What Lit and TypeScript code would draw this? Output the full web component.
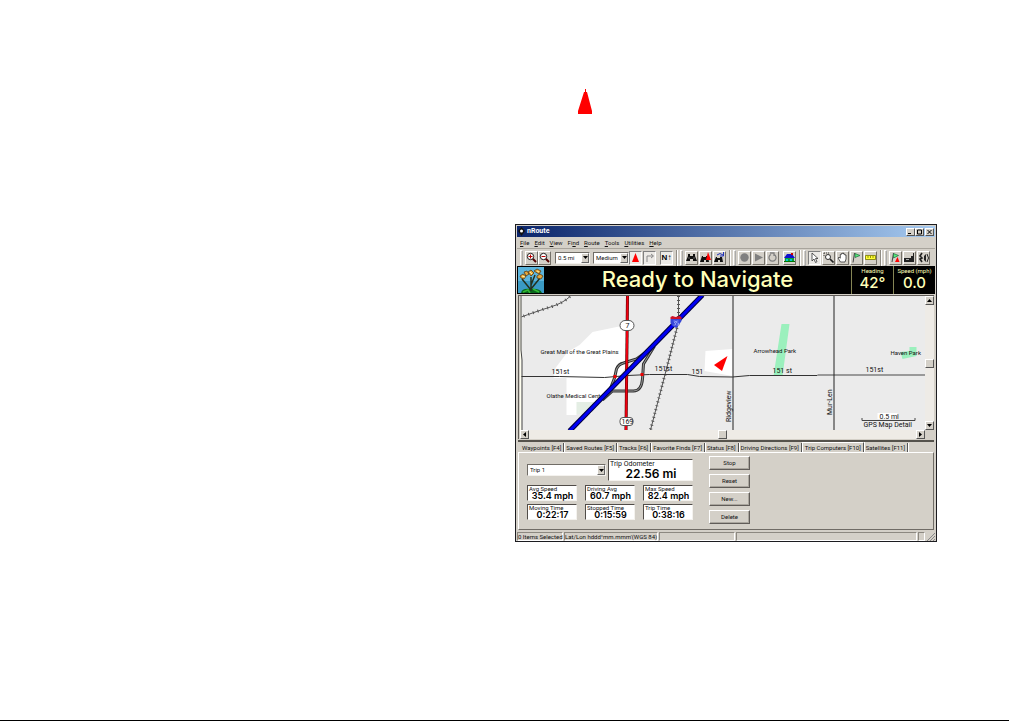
import { LitElement, html, svg, css } from "lit";
import { customElement, property } from "lit/decorators.js";

const glyphs: Record<string, unknown> = {
  zoomIn: svg`<path d="M6.500 6.500L10 10" stroke="#500" stroke-width="2"/><circle cx="4.500" cy="4.500" r="3.200" fill="#fff" stroke="#222"/><path d="M2.500 4.500h4M4.500 2.500v4" stroke="#b00"/>`,
  zoomOut: svg`<path d="M6.500 6.500L10 10" stroke="#500" stroke-width="2"/><circle cx="4.500" cy="4.500" r="3.200" fill="#fff" stroke="#222"/><path d="M2.500 4.500h4" stroke="#b00"/>`,
  track: svg`<path d="M5.500 1L9 10H2z" fill="#f00"/>`,
  turn: svg`<path d="M3 10V4h6M7 2l2.500 2L7 6" stroke="#888" fill="none"/>`,
  find: svg`<path d="M2 2h2v2h3V2h2v2l2 5H7V7H4v2H0l2-5z" fill="#111"/><path d="M3 5v2M8 5v2" stroke="#999" stroke-width=".6"/>`,
  findNear: svg`<path d="M2 4h1v1h3V4h2l1 6H6V8H4v2H0z" fill="#111"/><path d="M8 0l3 8H6z" fill="#f00"/>`,
  findLast: svg`<path d="M2 5h1v1h3V5h2l1 5H6V8H4v2H0z" fill="#111"/><path d="M3 3q3-3 6 0M9.500 0v4H6" stroke="#23b" fill="none"/>`,
  record: svg`<circle cx="5.500" cy="5.500" r="4.200" fill="#808080"/>`,
  play: svg`<path d="M2 1.500l8 4-8 4z" fill="#808080"/>`,
  loop: svg`<path d="M4 2.500a3.500 3.500 0 1 0 3 0M3 1h4v3" stroke="#808080" fill="none" stroke-width="1.300"/>`,
  home: svg`<path d="M0 6l3-4h5l3 4z" fill="#11c"/><path d="M7 1h2v2H7z" fill="#c00"/><path d="M1 6h9v3H1z" fill="#0a9a3a"/><path d="M0 9h11v1H0z" fill="#070"/><path d="M2 7h2v2H2zM6 7h2v2H6z" fill="#0cc"/>`,
  pointer: svg`<path d="M3 1v8l2-2 1.500 3.500 1.500-.8L6.500 6.500H9z" fill="#fff" stroke="#333" stroke-width=".8"/>`,
  zoomBox: svg`<path d="M1 1h5M1 1v4" stroke="#444" stroke-dasharray="1 1"/><circle cx="5" cy="5" r="2.500" fill="#fff" stroke="#333"/><path d="M7 7l3.500 3.500" stroke="#222" stroke-width="1.600"/>`,
  hand: svg`<path d="M3.500 10L1 6l1-.8 1.300 1V2.500h1V1.500h1.200V1h1v1h1.300v1h1.200v4l-1 3z" fill="#fff" stroke="#333" stroke-width=".8"/>`,
  flag: svg`<path d="M2 10.500L3.500 1" stroke="#444"/><path d="M4 1.500l5 2-5 2z" fill="#5e7" stroke="#264" stroke-width=".7"/>`,
  ruler: svg`<path d="M.5 3.500h10v4H.5z" fill="#ff3" stroke="#770" stroke-width=".8"/><path d="M3 4v2M5.500 4v2M8 4v2" stroke="#770" stroke-width=".8"/>`,
  goFlag: svg`<path d="M2 10L3.500 1" stroke="#444"/><path d="M3.500 1.500l5 2-5 2.500z" fill="#5e7" stroke="#264" stroke-width=".7"/><path d="M7.500 5l2 5H5z" fill="#f00"/>`,
  device: svg`<path d="M0 6h7V4h2V1h1v9H0z" fill="#222"/><path d="M2 7h3v1H2z" fill="#aaa"/>`,
  sound: svg`<path d="M4 1L2 4l2 2-2 1 2 3" stroke="#222" fill="none" stroke-width="1.600"/><path d="M6 4l2-2v8L6 8z" fill="#222"/><path d="M9 2q3 4 0 8" stroke="#222" fill="none"/>`,
};

@customElement("tool-button")
class ToolButton extends LitElement {
  @property() icon = "";
  @property() label = "";
  @property({ type: Boolean }) pressed = false;

  static styles = css`
    :host { display: block; flex: none; }
    .tool {
      display: grid; place-items: center; box-sizing: border-box;
      width: 13px; height: 14px; padding: 0;
      border: 1px solid; border-color: #fff #747068 #747068 #fff;
      background: #d4d0c8; color: #000;
      font: bold 8px/10px "Liberation Sans", sans-serif;
    }
    .pressed { background: #eceae6; border-color: #808080 #fff #fff #808080; }
    .icon { display: block; width: 11px; height: 11px; }
  `;

  render() {
    return html`<button class="tool ${this.pressed ? "pressed" : ""}" aria-label=${this.label} aria-pressed=${this.pressed}>
      ${this.icon === "north"
        ? html`<span>N↑</span>`
        : html`<svg class="icon" viewBox="0 0 11 11" aria-hidden="true">${glyphs[this.icon]}</svg>`}
    </button>`;
  }
}

@customElement("drop-down")
class DropDown extends LitElement {
  @property() label = "";
  @property({ type: Array }) options: string[] = [];

  static styles = css`
    :host { display: block; min-width: 0; }
    .field {
      display: flex; box-sizing: border-box; height: 12px;
      border: 1px solid; border-color: #706c66 #f4f2ee #f4f2ee #706c66; background: #fff;
    }
    .select {
      flex: 1; min-width: 0; appearance: none; border: 0; padding: 0 0 0 2px; margin: 0;
      background: none; color: #111; font: 6px/10px Roboto, sans-serif;
    }
    .arrow {
      display: grid; place-items: center; box-sizing: border-box; width: 8px;
      background: #d4d0c8; border: 1px solid; border-color: #fff #666 #666 #fff;
    }
    .tri { display: block; width: 5px; height: 3px; }
  `;

  render() {
    return html`<label class="field">
      <select class="select" aria-label=${this.label}>${this.options.map((o) => html`<option>${o}</option>`)}</select>
      <span class="arrow"><svg class="tri" viewBox="0 0 5 3"><path d="M0 0h5L2.500 3z"/></svg></span>
    </label>`;
  }
}

@customElement("route-map")
class RouteMap extends LitElement {
  static styles = css`
    :host { display: block; min-width: 0; }
    .map { display: block; width: 100%; height: 134px; background: #ebebeb; }
    .map text { font: 6px Roboto, sans-serif; fill: #111; }
    .map .large { font-size: 7px; }
  `;

  render() {
    const rail = "M679 296V322L668 365L651 430";
    const spur = "M519 318Q538 311 551 307T571 296";
    const ramps = "M655 346L637 359L624 363Q619 364 617 369L615 378L610 391L603 400M655 346L644 364L643 379Q642 391 634 391L613 391L603 400";
    const blue = "M570 431L703 295";
    return html`<svg class="map" viewBox="520 296 406 134" preserveAspectRatio="xMidYMid slice" role="img" aria-label="GPS map">
      <path fill="#fff" d="M593 332L622 326H627V366L605 397L592 406V414H577V415H567V378H554L556 368L568 352L580 345Z"/>
      <path fill="#e4eee4" d="M577 402H597L587 414H577Z"/>
      <path fill="#fff" d="M706 351L733 349V376L705 371Z"/>
      <path fill="#9bf0bd" d="M782 324H790L783 376H774ZM901 352L910 351V347H917V356L903 359Z"/>
      <g fill="none" stroke="#555">
        <path d=${rail} stroke-width="1"/><path d=${rail} stroke-width="3" stroke-dasharray="1 3"/>
        <path d=${spur} stroke-width="1"/><path d=${spur} stroke-width="3" stroke-dasharray="1 4"/>
      </g>
      <path fill="#fffff0" d="M520 296h2v134h-2z"/>
      <path fill="none" stroke="#444" d="M521.500 296V350L522.500 360V430"/>
      <g fill="none" stroke="#333">
        <path d="M522 376.500H560L605 377.500L628 375.500L650 374.500H688L700 376.500L733 377L750 375.500H818"/>
        <path d="M818 375H926" stroke="#999" stroke-width="2"/>
        <path d="M733.500 296V430M834.500 296V430" stroke="#222"/>
      </g>
      <text x="547" y="398">Olathe Medical Center</text>
      <path d=${ramps} fill="none" stroke="#333" stroke-width="3"/>
      <path d=${ramps} fill="none" stroke="#999" stroke-width="1"/>
      <path d="M628 296L626.500 430" stroke="#400" stroke-width="3"/>
      <path d="M628 296L626.500 430" stroke="#f00010" stroke-width="2"/>
      <path d=${blue} stroke="#00003c" stroke-width="5"/>
      <path d=${blue} stroke="#0000f4" stroke-width="3"/>
      <path d="M614 375h3v3h-3zM641 373h3v3h-3z" fill="#e00"/>
      <rect x="620.500" y="320.500" width="14" height="10" rx="5" fill="#fff" stroke="#555"/>
      <text class="large" x="626" y="328">7</text>
      <rect x="620.500" y="417.500" width="13" height="8" rx="3" fill="#fff" stroke="#555"/>
      <text class="large" x="622" y="424">169</text>
      <path d="M671 319h11v2l-2 3-3 4-4-2-2-3z" fill="#3545d8"/>
      <path d="M671 317l2-1 3 1 4-1 2 1v2h-11z" fill="#d01028"/>
      <path d="M674 321h2v1h-1v1h1v2h-2M679 321h-2v2h2v2h-2" stroke="#a9b4ff" stroke-width=".7" fill="none"/>
      <path d="M728 356L722.500 371L714.500 365Z" fill="#f00"/>
      <text x="541" y="354">Great Mall of the Great Plains</text>
      <text class="large" x="552" y="374">151st</text>
      <text class="large" x="655" y="371">151st</text>
      <text class="large" x="692" y="374">151</text>
      <text x="754" y="353">Arrowhead Park</text>
      <text class="large" x="773" y="373">151 st</text>
      <text class="large" x="866" y="372">151st</text>
      <text x="891" y="355">Haven Park</text>
      <text class="large" transform="translate(731 422) rotate(-90)">Ridgeview</text>
      <text class="large" transform="translate(832 415) rotate(-90)">Mur-Len</text>
      <path fill="#fff" d="M878 413h20v6h-20z"/>
      <path d="M862.500 418v2.500h53V418" fill="none" stroke="#444"/>
      <text class="large" x="880" y="419">0.5 mi</text>
      <text class="large" x="864" y="427">GPS Map Detail</text>
    </svg>`;
  }
}

@customElement("app-root")
class AppRoot extends LitElement {
  static styles = css`
    :host {
      display: block; box-sizing: border-box; min-height: 100vh;
      background: #fff; border-bottom: 1px solid #000; color: #111;
      font: 6px/8px Roboto, sans-serif;
    }
    button { font: inherit; color: inherit; }
    .page { display: grid; grid-template-columns: 515px minmax(0, 1fr) 72px; row-gap: 110px; padding-top: 89px; }
    .marker { grid-column: 2; display: block; width: 14px; height: 25px; margin-left: 63px; }
    .window { grid-column: 2; box-sizing: border-box; border: 1px solid #1c1c20; background: #d4d0c8; padding: 1px 1px 0; }
    .title {
      display: flex; align-items: center; gap: 2px; height: 11px; padding: 0 1px;
      background: linear-gradient(90deg, #0a246a, #a6caf0); color: #fff;
      font: bold 7px/11px Roboto, sans-serif;
    }
    .app-icon { display: block; width: 7px; height: 9px; }
    .grow { flex: 1; }
    .controls { display: flex; }
    .control, .scroll-button, .thumb {
      display: grid; place-items: center; box-sizing: border-box; padding: 0;
      background: #d4d0c8; border: 1px solid; border-color: #fff #555 #555 #fff;
    }
    .control { width: 9px; height: 8px; }
    .control:last-child { margin-left: 1px; }
    .control svg { display: block; width: 7px; height: 6px; }
    .menu { display: flex; align-items: center; gap: 5px; height: 11px; padding-left: 3px; }
    .menu-item { border: 0; background: none; padding: 0; }
    .toolbar { display: flex; align-items: center; height: 18px; padding-left: 2px; border-top: 1px solid #a8a49c; box-sizing: border-box; }
    .toolbar > * { flex: none; }
    .grip { box-sizing: border-box; width: 3px; height: 16px; border: 1px solid; border-color: #fff #aaa #aaa #fff; margin: 0 2px 0 1px; }
    .divider { width: 1px; height: 16px; background: #908c84; border-right: 1px solid #fff; margin: 0 1px 0 3px; }
    .set { display: flex; gap: 1px; }
    .zoom-set { gap: 0; padding-right: 4px; }
    .scale { width: 35px; }
    .detail { width: 36px; padding-left: 3px; }
    .north, .home { padding-left: 4px; }
    .banner { display: flex; height: 28px; background: #000; color: #ffffb8; box-sizing: border-box; }
    .logo { display: block; width: 26px; height: 26px; margin: 1px 0 0 1px; }
    .message { flex: 1; margin: 0; text-align: center; font: 500 22px/27px Inter, sans-serif; }
    .gauge { width: 41px; border-left: 1px solid #858555; text-align: center; }
    .gauge-label { line-height: 8px; padding-top: 1px; }
    .gauge-value { font: 500 15px/16px Inter, sans-serif; }
    .view { display: grid; grid-template-columns: minmax(0, 1fr) 9px; margin: 1px 1px 0 1px; padding-left: 1px; border: 1px solid; border-color: #605c58 #fff #fff #605c58; border-right: 0; border-bottom: 0; }
    .scroll { display: flex; background: #eeebe6; }
    .vertical { flex-direction: column; }
    .track { flex: 1; display: flex; align-items: center; justify-content: center; }
    .scroll-button, .thumb { width: 9px; height: 9px; }
    .scroll-button svg { display: block; width: 5px; height: 5px; }
    .tabs { display: flex; align-items: flex-end; height: 12px; margin: 1px 1px 0; border-top: 2px solid #55524c; box-sizing: border-box; padding-left: 2px; }
    .tab { height: 9px; padding: 0 2px; border: 0; border-right: 1px solid #555; background: none; line-height: 8px; box-shadow: 1px 0 #fff; white-space: nowrap; }
    .active { height: 10px; border-left: 1px solid #fff; border-top: 1px solid #fff; line-height: 7px; }
    .panel {
      display: grid; grid-template-columns: 166px 41px; gap: 16px; margin: 0 1px;
      border: 1px solid; border-color: #fff #706c66 #706c66 #fff; padding: 3px 8px 5px;
    }
    .readings { display: grid; gap: 3px; padding-top: 3px; align-content: start; }
    .summary { display: grid; grid-template-columns: 79px 1fr; gap: 2px; align-items: center; margin-bottom: 1px; }
    .cells { display: grid; grid-template-columns: repeat(3, 50px); gap: 3px 8px; margin: 0; }
    .cell {
      box-sizing: border-box; height: 16px; background: #fff; padding-left: 1px; margin: 0;
      border: 1px solid; border-color: #504c48 #f4f2ee #f4f2ee #504c48;
    }
    .cell-label { font: 6px/6px Roboto, sans-serif; white-space: nowrap; }
    .cell-value { margin: 0; text-align: center; font: 600 9px/8px Inter, sans-serif; color: #000; }
    .odometer { height: 22px; }
    .odometer .cell-label { font: 7px/8px Roboto, sans-serif; }
    .odometer .cell-value { font: 600 12px/12px Inter, sans-serif; }
    .actions { display: grid; gap: 4px; align-content: start; }
    .action { height: 14px; padding: 0; background: #d4d0c8; border: 1px solid; border-color: #fff #605c58 #605c58 #fff; box-shadow: inset -1px -1px #aaa69e; }
    .status { display: flex; gap: 1px; height: 9px; margin-top: 2px; white-space: nowrap; }
    .pane { box-sizing: border-box; height: 9px; border: 1px solid; border-color: #8c8880 #fff #fff #8c8880; line-height: 8px; }
    .selected { width: 46px; }
    .position { width: 94px; }
    .blank { width: 76px; }
    .end { width: 7px; }
    .resize { display: block; width: 9px; height: 9px; }
  `;

  private arrow(label: string, d: string) {
    return html`<button class="scroll-button" aria-label=${label}><svg viewBox="0 0 5 5"><path d=${d}/></svg></button>`;
  }

  private cell(label: string, value: string) {
    return html`<div class="cell"><dt class="cell-label">${label}</dt><dd class="cell-value">${value}</dd></div>`;
  }

  private tool(icon: string, label: string, pressed = false) {
    return html`<tool-button icon=${icon} label=${label} ?pressed=${pressed}></tool-button>`;
  }

  render() {
    const menus = ["File", "Edit", "View", "Find", "Route", "Tools", "Utilities", "Help"];
    const keys = [0, 0, 0, 2, 0, 0, 0, 0];
    const tabs = ["Waypoints [F4]", "Saved Routes [F5]", "Tracks [F6]", "Favorite Finds [F7]", "Status [F8]", "Driving Directions [F9]", "Trip Computers [F10]", "Satellites [F11]"];
    return html`<main class="page">
      <svg class="marker" viewBox="0 0 14 25" aria-hidden="true"><path d="M7 0h1v3h1l5 19v3H0v-3L6 3h1z" fill="#f00"/></svg>
      <section class="window">
        <header class="title">
          <svg class="app-icon" viewBox="0 0 7 9"><path d="M3.500 0L7 4 3.500 9 0 4z" fill="#111"/><circle cx="3.500" cy="4" r="1.500" fill="#fff"/></svg>
          <span class="grow">nRoute</span>
          <span class="controls">
            <button class="control" aria-label="Minimize"><svg viewBox="0 0 7 6"><path d="M1 4h3v1H1z"/></svg></button>
            <button class="control" aria-label="Maximize"><svg viewBox="0 0 7 6"><path d="M1.500 1h4v4h-4z" fill="none" stroke="#000"/></svg></button>
            <button class="control" aria-label="Close"><svg viewBox="0 0 7 6"><path d="M1.500 1l4 4M5.500 1l-4 4" stroke="#000"/></svg></button>
          </span>
        </header>
        <nav class="menu">
          ${menus.map((m, i) => html`<button class="menu-item">${m.slice(0, keys[i])}<u>${m[keys[i]]}</u>${m.slice(keys[i] + 1)}</button>`)}
        </nav>
        <div class="toolbar" role="toolbar">
          <span class="grip"></span>
          <div class="set zoom-set">${this.tool("zoomIn", "Zoom in")}${this.tool("zoomOut", "Zoom out")}</div>
          <drop-down class="scale" label="Map scale" .options=${["0.5 mi"]}></drop-down>
          <drop-down class="detail" label="Map detail" .options=${["Medium"]}></drop-down>
          <div class="set">${this.tool("track", "Track vehicle", true)}${this.tool("turn", "Show turns", true)}</div>
          <div class="north">${this.tool("north", "North up", true)}</div>
          <span class="divider"></span><span class="grip"></span>
          <div class="set">${this.tool("find", "Find")}${this.tool("findNear", "Find nearest")}${this.tool("findLast", "Recent finds")}</div>
          <span class="divider"></span><span class="grip"></span>
          <div class="set">${this.tool("record", "Record")}${this.tool("play", "Play")}${this.tool("loop", "Recalculate")}</div>
          <div class="home">${this.tool("home", "Go home")}</div>
          <span class="divider"></span><span class="grip"></span>
          <div class="set">${this.tool("pointer", "Select", true)}${this.tool("zoomBox", "Zoom tool")}${this.tool("hand", "Pan")}${this.tool("flag", "Waypoint")}${this.tool("ruler", "Measure")}</div>
          <span class="divider"></span><span class="grip"></span>
          <div class="set">${this.tool("goFlag", "Mark position")}${this.tool("device", "Device")}${this.tool("sound", "Voice")}</div>
        </div>
        <div class="banner">
          <svg class="logo" viewBox="0 0 26 26" aria-hidden="true">
            <path d="M0 0h26v26H0z" fill="#5cb4dc"/><path d="M0 14h26v12H0z" fill="#3a9ac4"/>
            <path d="M3 26q1-5 9-4 10-1 12 4z" fill="#08661c"/><path d="M5 25l5-2 2 3M15 22l6 3" stroke="#34b934" fill="none" stroke-width="1.500"/>
            <path d="M13 24V10M13 23L4 12M13 22L22 11M13 18L17 8" stroke="#24301c" stroke-width="1.500" fill="none"/>
            <path d="M2 9l3-2 3 2-2 3-3-1zM10 5l3-2 3 3-3 3zM16 4l3-2 4 2-2 3zM19 9l3-2 3 2-2 3-4-1zM6 5l3-1 2 3-3 2z" fill="#e6a83c" stroke="#5b3b12" stroke-width=".8"/>
            <path d="M4 9l3 1M12 5l2 2M19 4l2 1" stroke="#fff0a0"/>
          </svg>
          <h1 class="message">Ready to Navigate</h1>
          <div class="gauge"><div class="gauge-label">Heading</div><div class="gauge-value">42°</div></div>
          <div class="gauge"><div class="gauge-label">Speed (mph)</div><div class="gauge-value">0.0</div></div>
        </div>
        <div class="view">
          <route-map></route-map>
          <div class="scroll vertical">
            ${this.arrow("Scroll up", "M0 4h5L2.500 1z")}<div class="track"><span class="thumb"></span></div>${this.arrow("Scroll down", "M0 1h5L2.500 4z")}
          </div>
          <div class="scroll">
            ${this.arrow("Scroll left", "M4 0v5L1 2.500z")}<div class="track"><span class="thumb"></span></div>${this.arrow("Scroll right", "M1 0v5l3-2.500z")}
          </div>
        </div>
        <div class="tabs" role="tablist">
          ${tabs.map((t, i) => html`<button role="tab" aria-selected=${i === 6} class="tab ${i === 6 ? "active" : ""}">${t}</button>`)}
        </div>
        <div class="panel" role="tabpanel">
          <div class="readings">
            <div class="summary">
              <drop-down label="Trip" .options=${["Trip 1"]}></drop-down>
              <div class="cell odometer"><div class="cell-label">Trip Odometer</div><div class="cell-value">22.56 mi</div></div>
            </div>
            <dl class="cells">
              ${this.cell("Avg Speed", "35.4 mph")}${this.cell("Driving Avg", "60.7 mph")}${this.cell("Max Speed", "82.4 mph")}
              ${this.cell("Moving Time", "0:22:17")}${this.cell("Stopped Time", "0:15:59")}${this.cell("Trip Time", "0:38:16")}
            </dl>
          </div>
          <div class="actions">${["Stop", "Reset", "New...", "Delete"].map((a) => html`<button class="action">${a}</button>`)}</div>
        </div>
        <footer class="status">
          <span class="pane selected">0 Items Selected</span>
          <span class="pane position">Lat/Lon hddd°mm.mmm'(WGS 84)</span>
          <span class="pane blank"></span>
          <span class="pane grow"></span>
          <span class="pane end"></span>
          <svg class="resize" viewBox="0 0 9 9"><path d="M1 9l8-8M4 9l5-5M7 9l2-2" stroke="#888"/></svg>
        </footer>
      </section>
    </main>`;
  }
}
